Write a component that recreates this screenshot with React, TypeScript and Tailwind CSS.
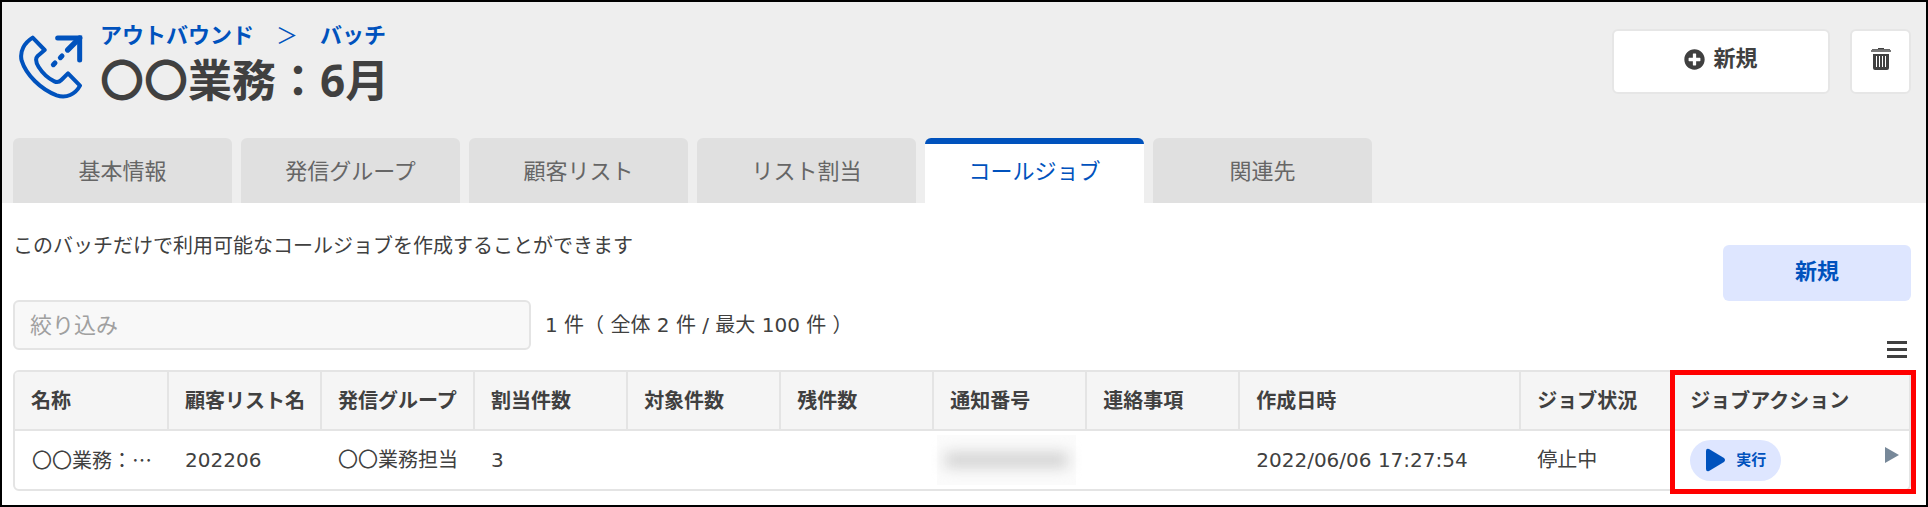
import React, { useState } from 'react';
import { FaPlusCircle } from 'react-icons/fa';

interface Column {
  label: string;
  width: string;
}

interface Job {
  name: string;
  customerList: string;
  group: string;
  assigned: number;
  createdAt: string;
  status: string;
}

const tabs = ['基本情報', '発信グループ', '顧客リスト', 'リスト割当', 'コールジョブ', '関連先'];

const columns: Column[] = [
  { label: '名称', width: 'w-[8.08%]' },
  { label: '顧客リスト名', width: 'w-[8.08%]' },
  { label: '発信グループ', width: 'w-[8.08%]' },
  { label: '割当件数', width: 'w-[8.08%]' },
  { label: '対象件数', width: 'w-[8.08%]' },
  { label: '残件数', width: 'w-[8.08%]' },
  { label: '通知番号', width: 'w-[8.08%]' },
  { label: '連絡事項', width: 'w-[8.08%]' },
  { label: '作成日時', width: 'w-[14.84%]' },
  { label: 'ジョブ状況', width: 'w-[8.08%]' },
  { label: 'ジョブアクション', width: 'w-auto' },
];

const jobs: Job[] = [
  {
    name: '〇〇業務：6月',
    customerList: '202206',
    group: '〇〇業務担当',
    assigned: 3,
    createdAt: '2022/06/06 17:27:54',
    status: '停止中',
  },
];

function OutboundIcon() {
  return (
    <svg viewBox="57 107 192 192" className="h-16 w-16 shrink-0 text-[#0052bd]" fill="none" stroke="currentColor" aria-hidden="true">
      <path
        d="M98 115 L134 152 L113 170 C105 178 108 190 116 203 C128 222 146 238 163 246 C172 250 178 248 184 242 L204 222 L240 259 C226 285 199 298 170 288 C122 270 78 226 65 184 C58 155 74 130 98 115 Z"
        strokeWidth="12"
        strokeLinejoin="round"
      />
      <path d="M173 116 H239 V182" strokeWidth="15" strokeLinecap="round" />
      <path d="M239 116 L203 152" strokeWidth="16" strokeLinecap="round" />
      <path d="M181 175 L186 170 M160 196 L165 191" strokeWidth="15" strokeLinecap="round" />
    </svg>
  );
}

function TrashIcon() {
  return (
    <svg viewBox="0 0 20 23" className="h-[23px] w-5" aria-hidden="true">
      <path d="M7 0 H13 V2 H7 Z" fill="#404040" />
      <path d="M1 1 H19 V2 H1 Z" fill="#666" />
      <path d="M0 2 H20 V4 H0 Z" fill="#777" />
      <path
        d="M2 6 H18 V20 Q18 22 16 22 H4 Q2 22 2 20 Z M5 8 V19 H6 V8 Z M8 8 V19 H9 V8 Z M11 8 V19 H12 V8 Z M14 8 V19 H15 V8 Z"
        fill="#404040"
        fillRule="evenodd"
      />
    </svg>
  );
}

function JobTable() {
  return (
    <div className="relative">
      <div className="overflow-hidden rounded-md border-2 border-[#e4e4e4]">
        <table className="w-full table-fixed text-left">
          <thead className="bg-[#f5f5f5]">
            <tr className="h-[58px] border-b-2 border-[#e4e4e4]">
              {columns.map((column, i) => (
                <th
                  key={column.label}
                  className={`${column.width} pl-4 font-bold whitespace-nowrap ${
                    i < columns.length - 1 ? 'border-r-2 border-[#e4e4e4]' : ''
                  }`}
                >
                  {column.label}
                </th>
              ))}
            </tr>
          </thead>
          <tbody>
            {jobs.map((job) => (
              <tr key={job.customerList} className="h-[59px] whitespace-nowrap">
                <td className="truncate pr-3 pl-[17px] font-['Noto_Sans_CJK_JP',sans-serif]">{job.name}</td>
                <td className="pl-[17px]">{job.customerList}</td>
                <td className="pl-[17px]">{job.group}</td>
                <td className="pl-[17px]">{job.assigned}</td>
                <td />
                <td />
                <td className="pl-1">
                  <div className="flex h-[50px] w-[139px] items-center bg-[#fbfbfb] px-2">
                    <div className="h-4 w-full bg-[#d4d4d4] blur-[7px]" />
                  </div>
                </td>
                <td />
                <td className="pl-[17px]">{job.createdAt}</td>
                <td className="pl-[17px]">{job.status}</td>
                <td className="pr-2.5 pl-[17px]">
                  <div className="flex items-center justify-between">
                    <button
                      type="button"
                      className="flex h-[41px] w-[91px] items-center gap-2.5 rounded-full bg-[#dee6ff] pl-4 text-[15px] font-bold text-[#0052bd]"
                    >
                      <svg viewBox="0 0 20 24" className="h-6 w-5" fill="currentColor" aria-hidden="true">
                        <path d="M0 3 Q0 0 3 1 L18 10 Q20 12 18 14 L3 23 Q0 24 0 21 Z" />
                      </svg>
                      実行
                    </button>
                    <button type="button" aria-label="次へ" className="mb-2.5">
                      <svg viewBox="0 0 14 16" className="h-4 w-3.5" fill="#778899" aria-hidden="true">
                        <path d="M0 0 L14 8 L0 16 Z" />
                      </svg>
                    </button>
                  </div>
                </td>
              </tr>
            ))}
          </tbody>
        </table>
      </div>
      {/* highlight around the action column */}
      <div className="pointer-events-none absolute top-0 -right-[5px] -bottom-[3px] w-[246px] border-5 border-[#ff0000]" />
    </div>
  );
}

export default function App() {
  const [activeTab, setActiveTab] = useState('コールジョブ');
  const [filter, setFilter] = useState('');

  return (
    <div className="min-h-screen border-2 border-black bg-white font-['DejaVu_Sans','Noto_Sans_CJK_JP',sans-serif] text-xl text-[#404040]">
      <header className="bg-[#eeeeee] pr-[15px] pl-[11px]">
        <div className="flex items-start justify-between">
          <div className="flex gap-[17px] pt-[19px] pl-1.5">
            <div className="pt-3.5">
              <OutboundIcon />
            </div>
            <div>
              <nav className="flex gap-[22px] text-[22px] leading-[30px] font-bold text-[#0052bd]">
                <a href="#outbound">アウトバウンド</a>
                <span className="font-normal">＞</span>
                <a href="#batch">バッチ</a>
              </nav>
              <h1 className="font-['Noto_Sans','Noto_Sans_CJK_JP',sans-serif] text-[44px] leading-[58px] font-bold">
                〇〇業務：6月
              </h1>
            </div>
          </div>
          <div className="flex gap-5 pt-[27px]">
            <button
              type="button"
              className="flex h-[65px] w-[218px] items-center justify-center gap-2 rounded-md border-2 border-[#e6e6e6] bg-white pb-1 text-[22px] font-bold"
            >
              <FaPlusCircle className="h-[21px] w-[21px]" />
              新規
            </button>
            <button
              type="button"
              aria-label="削除"
              className="flex h-[65px] w-[61px] items-center justify-center rounded-md border-2 border-[#e6e6e6] bg-white pb-1"
            >
              <TrashIcon />
            </button>
          </div>
        </div>
        <div role="tablist" className="mt-[29px] flex gap-[9px]">
          {tabs.map((tab) => (
            <button
              key={tab}
              type="button"
              role="tab"
              aria-selected={tab === activeTab}
              onClick={() => setActiveTab(tab)}
              className={`h-[65px] w-[219px] rounded-t-md text-[22px] ${
                tab === activeTab
                  ? 'border-t-6 border-[#0052bd] bg-white pb-0.5 text-[#0052bd]'
                  : 'bg-[#e0e0e0] pt-1 text-[#666666]'
              }`}
            >
              {tab}
            </button>
          ))}
        </div>
      </header>

      <main className="pr-[15px] pb-2 pl-[11px]">
        <div className="mb-3 flex items-start justify-between">
          <div className="pt-7">
            <p className="leading-[30px]">このバッチだけで利用可能なコールジョブを作成することができます</p>
            <div className="mt-[39px] flex items-center gap-3.5">
              <input
                type="text"
                aria-label="絞り込み"
                placeholder="絞り込み"
                value={filter}
                onChange={(e) => setFilter(e.target.value)}
                className="h-[50px] w-[518px] rounded-md border-2 border-[#e4e4e4] bg-[#f8f8f8] px-[15px] text-[22px] placeholder:text-[#a0a0a0]"
              />
              <span>1 件（ 全体 2 件 / 最大 100 件 ）</span>
            </div>
          </div>
          <div className="flex flex-col items-end gap-[39px] pt-[42px]">
            <button type="button" className="h-14 w-[188px] rounded-md bg-[#dee6ff] pb-0.5 text-[22px] font-bold text-[#0052bd]">
              新規
            </button>
            <button type="button" aria-label="メニュー" className="mr-1">
              <svg viewBox="0 0 20 18" className="h-[18px] w-5" fill="#404040" aria-hidden="true">
                <path d="M0 1 H20 V4 H0 Z M0 8 H20 V11 H0 Z M0 15 H20 V18 H0 Z" />
              </svg>
            </button>
          </div>
        </div>
        <JobTable />
      </main>
    </div>
  );
}
